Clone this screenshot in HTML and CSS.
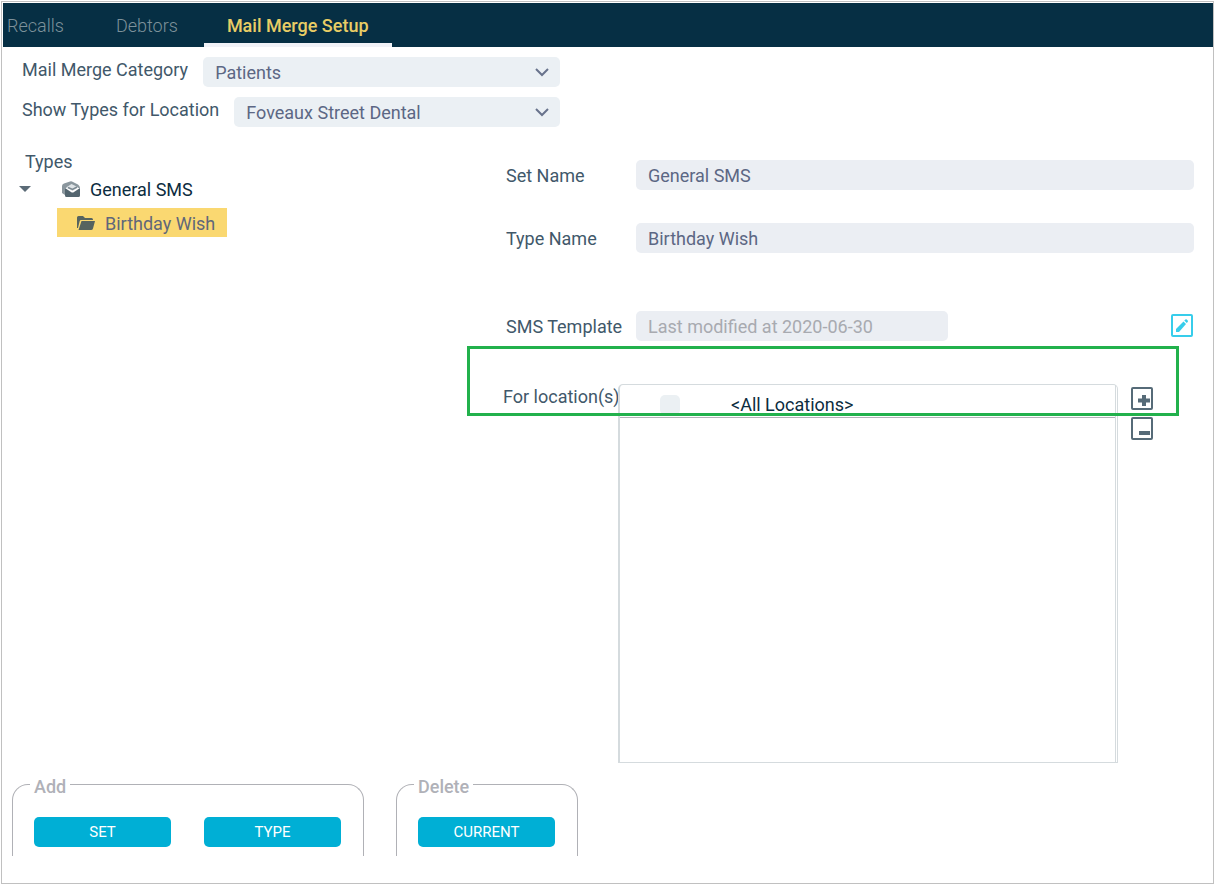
FILE: index.html
```html
<!DOCTYPE html>
<html lang="en">
<head>
  <meta charset="UTF-8">
  <title>Mail Merge Setup</title>
  <link rel="stylesheet" href="styles.css">
</head>
<body>

  <div class="window">
    <nav class="tabs">
      <a href="#recalls">Recalls</a>
      <a href="#debtors">Debtors</a>
      <a href="#mailmerge" class="active">Mail Merge Setup</a>
    </nav>

    <div class="filters">
      <div class="filter">
        <label for="category">Mail Merge Category</label>
        <div class="select-box">
          <select id="category">
            <option>Patients</option>
          </select>
          <svg width="14" height="9" viewBox="0 0 14 9"><path d="M1 1l6 6 6-6" fill="none" stroke="#68738c" stroke-width="2"/></svg>
        </div>
      </div>
      <div class="filter">
        <label for="location">Show Types for Location</label>
        <div class="select-box">
          <select id="location">
            <option>Foveaux Street Dental</option>
          </select>
          <svg width="14" height="9" viewBox="0 0 14 9"><path d="M1 1l6 6 6-6" fill="none" stroke="#68738c" stroke-width="2"/></svg>
        </div>
      </div>
    </div>

    <main class="content">
      <!-- Types tree -->
      <section class="types">
        <h2>Types</h2>
        <ul class="tree">
          <li>
            <div class="node">
              <button class="toggle" aria-label="Collapse"><svg width="12" height="6" viewBox="0 0 12 6"><path d="M0 0h12L6 6z" fill="#5b6b77"/></svg></button>
              <svg width="18" height="16" viewBox="0 0 18 16">
                <path d="M0 12V5Q0 3 2 2.500L8 0.500Q9 0 10 0.500L16 3.500Q18 5 18 7L3 7V14z" fill="#8b979e"/>
                <path d="M4 6.500L9.500 3 16.500 6.500 10.500 10z" fill="#dfe4e7"/>
                <path d="M3 7l6 4q1.500 1 3 0l6-4v7.500Q18 16 16.500 16h-12Q3 16 3 14.500z" fill="#53656f"/>
                <path d="M6 6.500l4.500 2L15 6" fill="none" stroke="#7b8992" stroke-width="1.500"/>
              </svg>
              <span>General SMS</span>
            </div>
            <ul>
              <li class="selected">
                <svg width="18" height="14" viewBox="0 0 18 14"><path d="M0 12V1.500Q0 0 1.500 0H6l2 2h6.500Q16 2 16 3.500V4H4Q3 4 2.700 5L1 12z" fill="#56635f"/><path d="M4.500 5H18l-2 7.500Q15.600 14 14 14H1.500z" fill="#56635f"/></svg>
                <span>Birthday Wish</span>
              </li>
            </ul>
          </li>
        </ul>
      </section>

      <form class="details">
        <div class="row">
          <label for="setName">Set Name</label>
          <input type="text" id="setName" value="General SMS">
        </div>
        <div class="row">
          <label for="typeName">Type Name</label>
          <input type="text" id="typeName" value="Birthday Wish">
        </div>
        <div class="row template">
          <label for="template">SMS Template</label>
          <input type="text" id="template" value="Last modified at 2020-06-30" readonly>
          <button type="button" class="icon-btn" aria-label="Edit template">
            <svg width="23" height="24" viewBox="0 0 23 24"><rect x="1" y="1" width="20" height="21" rx="1" fill="none" stroke="#37cdeb" stroke-width="2"/><path d="M5 18v-3L12.500 7.500l2.500 2.500L8 18z" fill="#37cdeb"/><path d="M13.300 6.600l1-1q.8-.6 1.500 0l.9.9q.6.800 0 1.500l-1 1z" fill="#37cdeb"/></svg>
          </button>
        </div>

        <div class="locations">
          <span class="locations-label">For location(s)</span>
          <div class="location-list">
            <table>
              <tr>
                <td class="check"><input type="checkbox" id="allLocations"></td>
                <td><label for="allLocations">&lt;All Locations&gt;</label></td>
              </tr>
            </table>
          </div>
          <div class="list-actions">
            <button type="button" class="icon-btn" aria-label="Add location">
              <svg width="22" height="23" viewBox="0 0 22 23"><rect x="1" y="1" width="20" height="21" rx="1" fill="none" stroke="#566b78" stroke-width="2"/><path d="M7 13.500h12M13 8v11" stroke="#566b78" stroke-width="4"/></svg>
            </button>
            <button type="button" class="icon-btn" aria-label="Remove location">
              <svg width="22" height="23" viewBox="0 0 22 23"><rect x="1" y="1" width="20" height="21" rx="1" fill="none" stroke="#566b78" stroke-width="2"/><path d="M8 16h11" stroke="#566b78" stroke-width="4"/></svg>
            </button>
          </div>
          <div class="highlight"></div>
        </div>
      </form>
    </main>

    <footer class="actions">
      <fieldset>
        <legend>Add</legend>
        <button>SET</button>
        <button>TYPE</button>
      </fieldset>
      <fieldset>
        <legend>Delete</legend>
        <button>CURRENT</button>
      </fieldset>
    </footer>
  </div>

</body>
</html>
```
FILE: styles.css
```css
* {
  box-sizing: border-box;
}

body {
  margin: 0;
  padding: 1px 4px 4px 1px;
  font-family: Roboto, sans-serif;
  font-size: 18px;
  color: #41586a;
  background: #fff;
}

input, select, button {
  font-family: inherit;
  font-size: inherit;
}

ul {
  list-style: none;
  margin: 0;
  padding: 0;
}

.window {
  display: flex;
  flex-direction: column;
  min-height: calc(100vh - 5px);
  border: 1px solid #c0c0c0;
  padding: 1px 0 0 1px;
}

/* Tabs */
.tabs {
  display: flex;
  height: 44px;
  background: #062f44;
}

.tabs a {
  padding: 0 26px;
  line-height: 46px;
  color: #7d919a;
  font-weight: 300;
  text-decoration: none;
}

.tabs a:first-child {
  padding-left: 4px;
}

.tabs a.active {
  padding: 0 23px;
  color: #e9cd65;
  font-weight: 500;
  border-bottom: 4px solid #f0f2f7;
}

/* Filters */
.filters {
  display: flex;
  flex-direction: column;
  gap: 10px;
  width: 557px;
  padding: 10px 0 0 19px;
}

.filter {
  display: flex;
  gap: 15px;
}

.filter label {
  line-height: 26px;
}

.select-box {
  position: relative;
  flex: 1;
}

.select-box select {
  appearance: none;
  display: block;
  width: 100%;
  height: 30px;
  padding: 0 12px;
  border: none;
  border-radius: 5px;
  background: #ebf0f4;
  color: #5c6784;
}

.select-box svg {
  position: absolute;
  top: 11px;
  right: 11px;
  pointer-events: none;
}

.content {
  display: grid;
  grid-template-columns: 464px 1fr;
  flex: 1;
}

/* Types tree */
.types {
  padding: 24px 0 0 16px;
}

.types h2 {
  margin: 0 0 0 6px;
  font-size: 18px;
  font-weight: 400;
  line-height: 22px;
}

.node {
  display: flex;
  align-items: center;
  gap: 10px;
  height: 32px;
  color: #0c2c40;
}

.toggle {
  display: flex;
  width: 33px;
  padding: 0;
  border: none;
  background: none;
}

.selected {
  display: flex;
  align-items: center;
  gap: 10px;
  width: 170px;
  height: 29px;
  margin: 3px 0 0 38px;
  padding: 1px 0 0 20px;
  background: #fad871;
  color: #60677a;
}

/* Details form */
.details {
  display: flex;
  flex-direction: column;
  padding-top: 33px;
}

.row {
  display: flex;
  align-items: center;
  margin-bottom: 33px;
  padding: 0 19px 0 39px;
}

.row label {
  width: 130px;
}

.row input {
  flex: 1;
  min-width: 0;
  height: 30px;
  padding: 0 12px;
  border: none;
  border-radius: 5px;
  background: #ebeef3;
  color: #5c6784;
}

.row.template {
  margin: 25px 0 5px;
}

.row.template input {
  flex: 0 1 312px;
  color: #a8aab0;
}

.icon-btn {
  display: flex;
  padding: 0;
  border: none;
  background: none;
  cursor: pointer;
}

.row .icon-btn {
  margin-left: auto;
}

.locations {
  position: relative;
  display: flex;
  flex: 1;
  padding: 38px 60px 0 36px;
}

.locations-label {
  width: 115px;
  line-height: 26px;
  white-space: nowrap;
}

.location-list {
  flex: 1;
  padding-right: 1px;
  border: 1px solid #d5dbde;
  border-left-width: 2px;
  border-radius: 5px 5px 0 0;
}

.location-list table {
  display: flex;
  flex-direction: column;
  height: 100%;
  border-right: 1px solid #d5dbde;
}

.location-list tr {
  display: flex;
  align-items: flex-end;
  height: 33px;
  border-bottom: 1px solid #b0b1b6;
}

.location-list tbody {
  width: 100%;
}

.location-list td {
  padding: 0;
  line-height: 24px;
  color: #0c2c40;
}

.location-list .check {
  width: 111px;
  padding-left: 40px;
}

.check input {
  appearance: none;
  display: block;
  width: 20px;
  height: 20px;
  margin: 0 0 2px;
  border-radius: 5px;
  background: #ebf0f3;
}

.list-actions {
  display: flex;
  flex-direction: column;
  gap: 7px;
  padding: 3px 0 0 13px;
}

.highlight {
  position: absolute;
  top: 0;
  left: 0;
  right: 34px;
  height: 70px;
  border: 3px solid #22b14c;
  pointer-events: none;
}

/* Bottom buttons */
.actions {
  display: flex;
  gap: 32px;
  padding: 10px 0 27px 9px;
}

.actions fieldset {
  display: flex;
  gap: 33px;
  margin: 0;
  padding: 22px 22px 9px 21px;
  border: 1px solid #b0b1b6;
  border-bottom: none;
  border-radius: 16px 16px 0 0;
}

.actions legend {
  margin-left: -4px;
  padding: 6px 4px 0;
  line-height: 16px;
  font-weight: 500;
  color: #b0b1b8;
}

.actions button {
  width: 137px;
  height: 30px;
  border: none;
  border-radius: 5px;
  background: #00afd5;
  color: #fff;
  font-size: 15px;
  cursor: pointer;
}
```
